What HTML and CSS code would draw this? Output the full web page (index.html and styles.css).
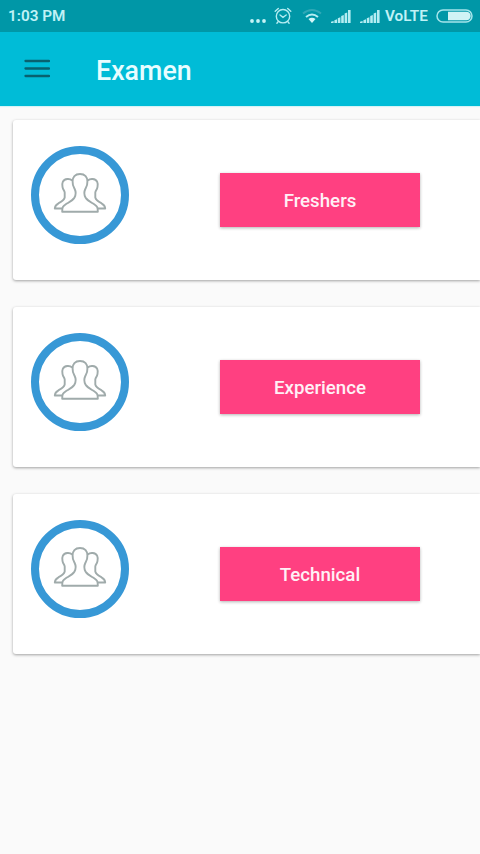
FILE: index.html
```
<!DOCTYPE html>
<html lang="en">
<head>
<meta charset="utf-8">
<title>Examen</title>
<link rel="stylesheet" href="styles.css">
</head>
<body>
<svg class="defs" aria-hidden="true">
  <symbol id="people" viewBox="0 0 98 98">
    <circle cx="49" cy="49" r="45" fill="#fff" stroke="#3798d6" stroke-width="8"/>
    <g fill="none" stroke="#a0abab" stroke-width="1.900" stroke-linejoin="round">
      <path d="M41.200 34.500C39 32.400 33.500 32.300 31.800 35.800C30.800 38 31.300 39.500 31.600 41.300C31.900 43.500 33.500 44.500 33.700 46.500V51.500C33 54.500 30 56 27.500 57.300C25 58.600 23.900 59.500 23.800 62.500H31.500"/>
      <path d="M56.800 34.500C59 32.400 64.500 32.300 66.200 35.800C67.200 38 66.700 39.500 66.400 41.300C66.100 43.500 64.500 44.500 64.300 46.500V51.500C65 54.500 68 56 70.500 57.300C73 58.600 74.100 59.500 74.200 62.500H66.500"/>
      <path d="M49 28C44 28 41.500 31 41.600 35.500C41.400 39.500 42.600 41 43.700 43C44.900 45.500 45.100 48.500 43.500 51.500C41.500 55 37.500 56.500 34.500 58.500C31.700 60.300 31.200 61.500 31.200 65.700H66.800C66.800 61.500 66.300 60.300 63.500 58.500C60.500 56.500 56.500 55 54.500 51.500C52.900 48.500 53.100 45.500 54.300 43C55.400 41 56.600 39.500 56.400 35.500C56.500 31 54 28 49 28Z"/>
    </g>
  </symbol>
  <symbol id="signal" viewBox="0 0 20 14">
    <path d="M0 14V12.800L2.600 12V14ZM3.400 14V11.300L6 10.300V14ZM6.800 14V9.300L9.400 8.300V14ZM10.200 14V7L12.800 6V14ZM13.600 14V4.500L16.200 3.500V14ZM17 14V1H19.600V14Z" fill="#b5edf2"/>
  </symbol>
</svg>

<div class="status">
  <span class="time">1:03 PM</span>
  <svg class="dots" width="16" height="4" viewBox="0 0 16 4"><g fill="#c5f3f6"><circle cx="2" cy="2" r="1.900"/><circle cx="8" cy="2" r="1.900"/><circle cx="14" cy="2" r="1.900"/></g></svg>
  <svg class="alarm" width="18" height="18" viewBox="0 0 18 18" fill="none" stroke="#b5edf2" stroke-width="1.400" stroke-linecap="round"><circle cx="9" cy="9.200" r="6.700"/><path d="M1.200 4.200L4.300 1.500M16.800 4.200L13.700 1.500M6 8L9 10.300L12.200 8M4.200 14.600L2.900 16.200M13.800 14.600L15.100 16.200"/></svg>
  <svg class="wifi" width="20" height="16" viewBox="0 0 20 16" fill="none" stroke-width="2"><path d="M1 5.500Q10 -1.500 19 5.500" stroke="#30a9b7"/><path d="M4 9Q10 4 16 9" stroke="#b5edf2"/><path d="M6.500 11Q10 8.500 13.500 11L10 15Z" fill="#d5f7f8"/></svg>
  <svg class="signal first" width="20" height="14"><use href="#signal"/></svg>
  <svg class="signal" width="20" height="14"><use href="#signal"/></svg>
  <span class="volte">VoLTE</span>
  <svg class="battery" width="37" height="14" viewBox="0 0 37 14"><rect x="1" y="1" width="35" height="12" rx="6" fill="none" stroke="#a5e5eb" stroke-width="1.500"/><path d="M12 2.800H30.500A4.200 4.200 0 0 1 30.500 11.200H12Z" fill="#d0f3f5"/></svg>
</div>

<header class="toolbar">
  <svg class="menu" width="26" height="19" viewBox="0 0 26 19"><path d="M1.500 2H25M1.500 9.500H25M1.500 17H25" stroke="#08616f" stroke-width="2.300" stroke-linecap="round"/></svg>
  <h1>Examen</h1>
</header>

<main class="list">
  <section class="card"><svg class="avatar"><use href="#people"/></svg><button>Freshers</button></section>
  <section class="card"><svg class="avatar"><use href="#people"/></svg><button>Experience</button></section>
  <section class="card"><svg class="avatar"><use href="#people"/></svg><button>Technical</button></section>
</main>
</body>
</html>
```
FILE: styles.css
```
* { box-sizing: border-box; }
html, body { height: 100%; }
body {
  margin: 0;
  overflow: hidden;
  background: #fafafa;
  font-family: Roboto, "Liberation Sans", sans-serif;
}
svg { display: block; flex: none; }
.defs { width: 0; height: 0; }

.status {
  display: flex;
  align-items: center;
  height: 32px;
  padding: 0 7px 0 8px;
  background: #0097a7;
  color: #c0f2f6;
  font-weight: 600;
}
.time { flex: 1; font-size: 15.300px; line-height: 32px; }
.dots { margin: 9px 8px 0 0; }
.alarm { margin-right: 10px; }
.wifi { margin: 0 9px 0 0; }
.signal { margin-right: 5px; }
.signal.first { margin-right: 9px; }
.volte { width: 44px; font-size: 15.300px; white-space: nowrap; }
.battery { margin-left: 7px; }

.toolbar {
  display: flex;
  align-items: center;
  height: 74px;
  padding: 0 24px;
  background: #00bcd7;
  box-shadow: 0 1px 1px #d5f3f6;
}
.menu { margin-bottom: 1px; }
.toolbar h1 {
  margin: 4px 0 0 46px;
  color: #e8fdff;
  font-size: 26.800px;
  font-weight: 500;
  line-height: 32px;
}

.list {
  display: grid;
  gap: 26.700px;
  padding: 14px 0 0 13px;
}
.card {
  display: flex;
  align-items: flex-start;
  height: 160.300px;
  padding: 26px 0 0 18px;
  border-radius: 3px 0 0 3px;
  background: #fff;
  box-shadow: 0 1px 3px rgba(0, 0, 0, .36);
}
.avatar { width: 98px; height: 98px; }
.card button {
  width: 200px;
  height: 53.500px;
  margin: 27.300px 0 0 91px;
  padding: 2px 0 0;
  border: 0;
  background: #ff4081;
  color: #fff0f6;
  font: 500 18.700px/51px Roboto, "Liberation Sans", sans-serif;
  box-shadow: 0 1px 3px rgba(0, 0, 0, .3);
}
```
